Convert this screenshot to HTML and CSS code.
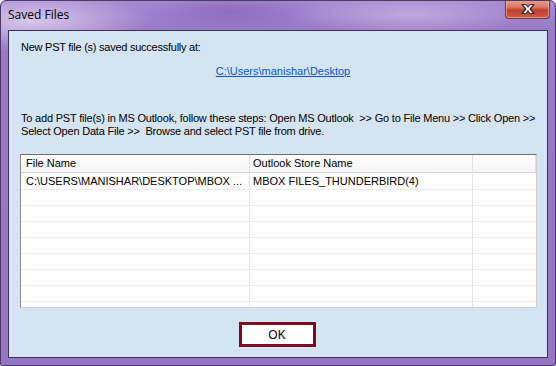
FILE: index.html
```html
<!DOCTYPE html>
<html>
<head>
<meta charset="utf-8">
<link rel="stylesheet" href="styles.css">
</head>
<body>
<div class="window">
  <div class="titlebar">
    <span class="title">Saved Files</span>
    <div class="close">
      <svg width="20" height="12" viewBox="0 0 20 12">
        <path d="M4 1.5 L8 1.5 L10 4 L12 1.5 L16 1.5 L12.2 6 L16 10.5 L12 10.5 L10 8 L8 10.5 L4 10.5 L7.8 6 Z" fill="#fff" stroke="#3a2a2a" stroke-width="1.2" stroke-linejoin="round"/>
      </svg>
    </div>
  </div>
  <div class="client">
    <p class="msg">New PST file (s) saved successfully at:</p>
    <p class="linkline"><a class="path" href="#">C:\Users\manishar\Desktop</a></p>
    <p class="steps">To add PST file(s) in MS Outlook, follow these steps: Open MS Outlook&nbsp; &gt;&gt; Go to File Menu &gt;&gt; Click Open &gt;&gt;<br>Select Open Data File &gt;&gt;&nbsp; Browse and select PST file from drive.</p>
    <div class="grid">
      <div class="row head">
        <div class="c c1">File Name</div>
        <div class="c c2">Outlook Store Name</div>
        <div class="c c3"></div>
      </div>
      <div class="row">
        <div class="c c1">C:\USERS\MANISHAR\DESKTOP\MBOX ...</div>
        <div class="c c2">MBOX FILES_THUNDERBIRD(4)</div>
        <div class="c c3"></div>
      </div>
      <div class="row"><div class="c c1"></div><div class="c c2"></div><div class="c c3"></div></div>
      <div class="row"><div class="c c1"></div><div class="c c2"></div><div class="c c3"></div></div>
      <div class="row"><div class="c c1"></div><div class="c c2"></div><div class="c c3"></div></div>
      <div class="row"><div class="c c1"></div><div class="c c2"></div><div class="c c3"></div></div>
      <div class="row"><div class="c c1"></div><div class="c c2"></div><div class="c c3"></div></div>
      <div class="row"><div class="c c1"></div><div class="c c2"></div><div class="c c3"></div></div>
      <div class="row"><div class="c c1"></div><div class="c c2"></div><div class="c c3"></div></div>
      <div class="row"><div class="c c1"></div><div class="c c2"></div><div class="c c3"></div></div>
    </div>
    <div class="actions">
      <button class="ok">OK</button>
    </div>
  </div>
</div>
</body>
</html>
```
FILE: styles.css
```css
html, body {
  margin: 0;
  padding: 0;
  background: #ffffff;
}
.window {
  width: 556px;
  height: 366px;
  box-sizing: border-box;
  border: 1px solid #4b3a63;
  border-radius: 6px 6px 2px 2px;
  background:
    radial-gradient(ellipse 120px 30px at 30px 20px, rgba(235,225,248,0.75), rgba(235,225,248,0) 100%),
    radial-gradient(ellipse 90px 20px at 230px 10px, rgba(120,80,170,0.45), rgba(120,80,170,0) 100%),
    radial-gradient(ellipse 120px 22px at 410px 14px, rgba(210,195,235,0.6), rgba(210,195,235,0) 100%),
    linear-gradient(180deg, #a68ad0 0%, #9879c6 30px, #9576c2 100%);
  display: flex;
  flex-direction: column;
  font-family: "Liberation Sans", Arial, sans-serif;
  overflow: hidden;
}
.titlebar {
  height: 29px;
  display: flex;
  align-items: flex-start;
  flex: none;
}
.title {
  font-family: "Open Sans", "Noto Sans", sans-serif;
  font-size: 12px;
  color: #000;
  padding: 6px 0 0 7px;
  line-height: 16px;
}
.close {
  margin-left: auto;
  margin-right: 5px;
  margin-top: -1px;
  width: 45px;
  height: 19px;
  box-sizing: border-box;
  border: 1px solid #6a3b45;
  border-top: none;
  border-radius: 0 0 4px 4px;
  background: linear-gradient(180deg, #e8a392 0%, #d9776a 40%, #c2402f 55%, #cb5a45 100%);
  box-shadow: inset 0 0 0 1px rgba(255,200,190,0.55);
  display: flex;
  align-items: center;
  justify-content: center;
}
.client {
  flex: 1;
  margin: 0 7px 7px 7px;
  background: #d5e4f3;
  border: 1px solid #3d3150;
  display: flex;
  flex-direction: column;
  font-size: 11px;
  color: #000;
}
.msg {
  margin: 10px 0 0 12px;
  line-height: 13px;
  letter-spacing: -0.25px;
}
.linkline {
  margin: 11px 0 0 0;
  line-height: 13px;
  text-align: center;
  padding-left: 10px;
}
.path {
  color: #0a55d8;
  text-decoration: underline;
}
.steps {
  margin: 34px 0 0 12px;
  line-height: 13px;
  white-space: nowrap;
  letter-spacing: -0.2px;
}
.grid {
  margin: 16px 10px 0 11px;
  height: 154px;
  box-sizing: border-box;
  background: #fff;
  border-top: 1px solid #6e6e6e;
  border-left: 1px solid #8a8a8a;
  border-right: 1px solid #d0d0d0;
  border-bottom: 1px solid #d0d0d0;
  overflow: hidden;
}
.row {
  display: flex;
  height: 15px;
  border-bottom: 1px solid #ebebeb;
}
.row.head {
  height: 17px;
  background: linear-gradient(180deg, #ffffff 0%, #f3f4f6 100%);
  border-bottom: 1px solid #d6d6d6;
  margin-bottom: 1px;
}
.c {
  box-sizing: border-box;
  border-right: 1px solid #e6e6e6;
  line-height: 15px;
  padding-left: 5px;
  white-space: nowrap;
  overflow: hidden;
}
.head .c {
  line-height: 17px;
  border-right: 1px solid #e0e0e0;
}
.c1 { width: 229px; }
.c2 { width: 223px; padding-left: 3px; }
.c3 { flex: 1; border-right: none; }
.actions {
  display: flex;
  justify-content: center;
  margin-top: 14px;
  padding-right: 2px;
}
.ok {
  width: 77px;
  height: 25px;
  box-sizing: border-box;
  border: 3px solid #7d0a1e;
  background: #fff;
  font-family: "Liberation Sans", Arial, sans-serif;
  font-size: 12px;
  color: #000;
  padding: 0;
}
```
